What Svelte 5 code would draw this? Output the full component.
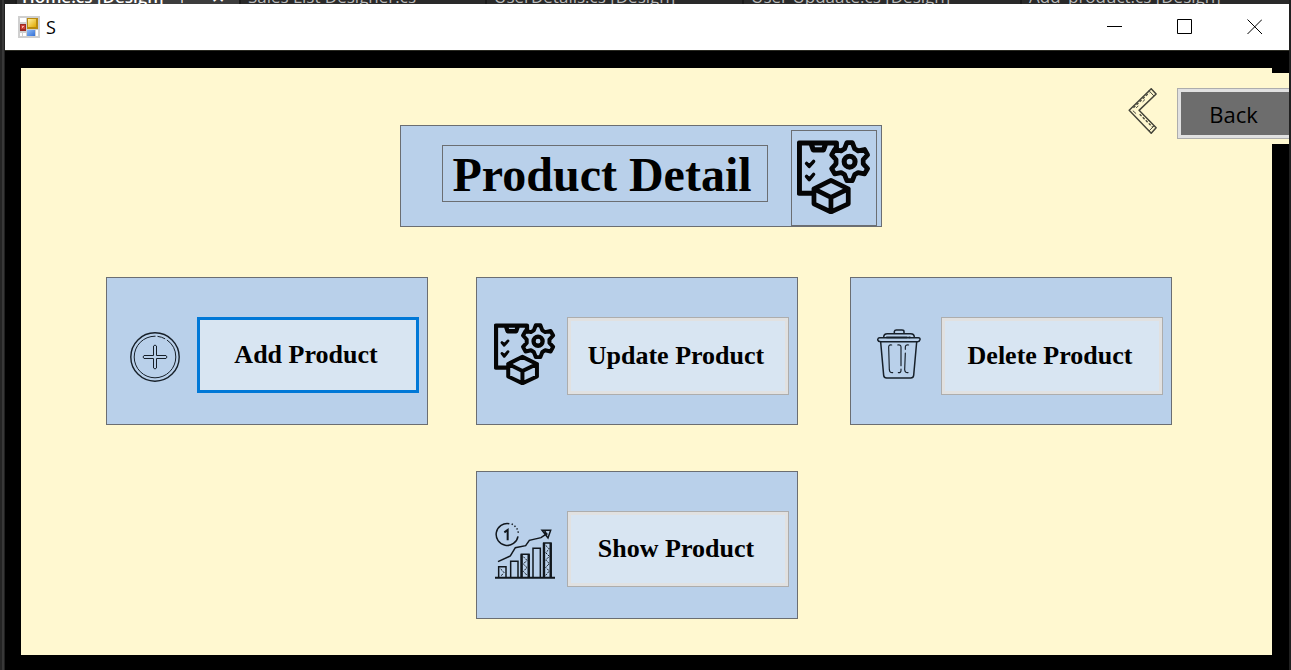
<script>
  const tabs = [
    { name: 'Sales List Designer.cs', width: 246 },
    { name: 'UserDetails.cs [Design]', width: 257 },
    { name: 'User Updaate.cs [Design]', width: 278 },
    { name: 'Add_product.cs [Design]', width: 260 }
  ];
  const cards = [
    { label: 'Add Product', icon: 'add', focused: true },
    { label: 'Update Product', icon: 'product' },
    { label: 'Delete Product', icon: 'trash' },
    { label: 'Show Product', icon: 'chart', short: true }
  ];
</script>

{#snippet productIcon(size)}
  <svg width={size} height={size} viewBox="38 54 218 218" fill="none" stroke="#050505" stroke-width="15" stroke-linejoin="round" stroke-linecap="round" aria-hidden="true">
    <path d="M84 211H45V63H154V83M80 66L86 83H116L122 66" />
    <path d="M66 123L74 132L87 117M66 161L74 171L87 155" stroke-width="10" />
    <path d="M69 125L77 127L83 122M69 163L77 166L83 160" stroke-width="8" />
    <path transform="translate(193 118)" stroke-width="14" d="M-15 -38L-8 -56H8L15 -38L25 -32L44 -36L53 -20L40 -6V6L53 20L44 36L25 32L15 38L8 56H-8L-15 38L-25 32L-44 36L-53 20L-40 6V-6L-53 -20L-44 -36L-25 -32Z" />
    <circle cx="193" cy="118" r="16" />
    <path d="M138 173L189 198V242L138 266L88 242V198ZM88 198L138 223L189 198M138 223V266" stroke-width="14" />
  </svg>
{/snippet}

<div class="desktop">
  <div class="tabs">
    <div class="tab active"><span>Home.cs [Design]</span><i>⊢</i><i>✕</i></div>
    {#each tabs as tab}
      <div class="tab" style="width: {tab.width}px">{tab.name}</div>
    {/each}
  </div>

  <div class="window">
    <div class="titlebar">
      <svg width="22" height="22" viewBox="0 0 22 22" aria-hidden="true">
        <defs>
          <linearGradient id="gold" x2="1" y2="1"><stop stop-color="#fff0a0" /><stop offset="1" stop-color="#e0a800" /></linearGradient>
          <linearGradient id="blue" x2="1" y2="1"><stop stop-color="#8fbcf7" /><stop offset="1" stop-color="#326fd6" /></linearGradient>
        </defs>
        <path fill="#cfcfcf" d="M0 0H22V22H0z" />
        <path fill="#fff" d="M2 2H8V6H2zM2 17H4V20H2zM5 17H8V20H5zM18 14H20V20H18z" />
        <path fill="#9c2a22" d="M2 8H8V15H2z" /><path fill="#cf4437" d="M3 9H7V13H3z" /><path fill="#f3b0a8" d="M4 10H6V11H5V12H4z" />
        <path fill="#b88a10" d="M9 2H20V13H9z" /><path fill="url(#gold)" d="M10 3H18V11H10z" />
        <path fill="url(#blue)" d="M9 14H17V20H9z" />
      </svg>
      <span class="caption">S</span>
      <button class="sys" aria-label="Minimize"><svg width="15" height="16"><path d="M0 7.5H15" /></svg></button>
      <button class="sys" aria-label="Maximize"><svg width="15" height="16"><path d="M.5 .5H14.5V14.5H.5z" /></svg></button>
      <button class="sys" aria-label="Close"><svg width="15" height="16"><path d="M.5 .5L15 15M15 .5L.5 15" /></svg></button>
    </div>

    <div class="frame">
      <main>
        <nav>
          <svg width="30" height="46" viewBox="806 264 88 140" fill="none" stroke="#45453a" stroke-width="4.500" stroke-linejoin="round" aria-hidden="true">
            <path d="M808 332L875 266L890 282L838 332L890 385L875 402Z" />
            <path d="M868 272L883 288M819 333L829 342M868 395L884 379" stroke-width="3" />
            <path d="M821 324L869 278M840 344L880 384" stroke-dasharray="8 5" stroke-width="4" />
            <path d="M829 325L836 318M849 306L856 299M848 342L853 347M866 361L872 367" stroke-width="3" />
          </svg>
          <button class="back">Back</button>
        </nav>

        <header>
          <h1>Product Detail</h1>
          <div class="picture">{@render productIcon(74)}</div>
        </header>

        <section>
          {#each cards as card}
            <div class="card">
              <div class="icon" class:lower={card.focused || card.short}>
                {#if card.icon === 'product'}
                  {@render productIcon(62)}
                {:else if card.icon === 'add'}
                  <svg width="50" height="50" viewBox="0 0 50 50" fill="none" stroke="#17202a" aria-hidden="true">
                    <circle cx="25" cy="25" r="24.2" stroke-width="1.4" />
                    <circle cx="25" cy="25" r="20.8" stroke-width="1" stroke-dasharray="98 2 8 2 20 1" />
                    <path d="M23.5 14Q25 12 26.500 14V23.500H36Q38 25 36 26.500H26.500V36Q25 38 23.500 36V26.500H14Q12 25 14 23.500H23.500Z" stroke-width="1" />
                  </svg>
                {:else if card.icon === 'trash'}
                  <svg width="44" height="50" viewBox="112 176 132 150" fill="none" stroke="#17202a" stroke-width="4.500" stroke-linejoin="round" stroke-linecap="round" aria-hidden="true">
                    <path d="M164 190V183Q165 179 170 179H187Q193 179 193 184V190M132 201Q132 190 143 190H213Q224 190 224 201" />
                    <path d="M120 202H236Q242 202 241 208Q240 214 234 214H123Q115 214 114 208Q115 202 120 202Z" />
                    <path d="M123 215L132 315Q133 323 141 323H213Q221 323 222 315L231 215" />
                    <path d="M141 201H202M208 201H211" stroke-width="5" />
                    <path d="M156 224Q147 222 147 230L149 298Q150 308 159 307M174 224Q184 222 184 230V286M184 296V300Q184 308 176 307M207 224Q197 222 197 230V237M197 248L195 298Q196 308 205 307" stroke-width="3.500" />
                  </svg>
                {:else}
                  <svg width="60" height="58" viewBox="77 170 180 174" fill="none" stroke="#11171d" stroke-width="4.500" aria-hidden="true">
                    <path d="M120 175A33 33 0 1 0 146 213" />
                    <path d="M127 176A33 33 0 0 1 147 208" stroke-dasharray="4 6" />
                    <path d="M105 201L115 194V225" stroke-width="6" />
                    <path d="M86 289L123 272L138 247L169 241L180 225L215 217L234 204M218 195H244L236 218ZM226 196L233 210" />
                    <path d="M77 337H257" stroke-width="6" />
                    <path d="M88 336V304H110V336M124 336V288H146V336M156 336V267H179V336M191 336V249H213V336M223 336V233H245V336" />
                    <path d="M94 311L104 321L96 331M162 274L173 285L162 296L173 307L162 318L173 330M229 240L240 251L229 262L240 273L229 284L240 295L229 306L240 317L229 330" stroke-width="3" stroke-dasharray="7 3" />
                    <path d="M157 267V336M178 267V336M224 233V336M244 233V336" stroke-width="7" />
                  </svg>
                {/if}
              </div>
              <button class:focused={card.focused} class:short={card.short}>{card.label}</button>
            </div>
          {/each}
        </section>
      </main>
    </div>
  </div>
</div>

<style>
  :global(body) {
    margin: 0;
    background: #262626;
  }
  * {
    box-sizing: border-box;
  }
  svg {
    display: block;
    flex: none;
  }
  button {
    padding: 0;
    color: #000;
  }
  .desktop {
    min-height: 100vh;
    display: flex;
    flex-direction: column;
    padding: 0 2px 0 5px;
    overflow: hidden;
    background: linear-gradient(90deg, #242424 2px, #383838 2px, #383838 4px, #202020 4px);
  }
  .tabs {
    height: 4px;
    display: flex;
    align-items: flex-end;
    overflow: hidden;
    margin-left: 10px;
    color: #b9b9b9;
    background: #2a2a2a;
    font: 17px/24px "Open Sans", "Noto Sans", sans-serif;
  }
  .tab {
    flex: none;
    height: 22px;
    padding-left: 7px;
    border-left: 2px solid #1b1b1b;
    line-height: 30px;
    white-space: nowrap;
  }
  .tab.active {
    width: 224px;
    display: flex;
    gap: 16px;
    padding-left: 5px;
    color: #fff;
    background: #3d3d3d;
    font-weight: 600;
  }
  .tab i {
    font-style: normal;
    font-weight: 400;
  }
  .window {
    flex: 1;
    display: flex;
    flex-direction: column;
    background: #fff;
  }
  .titlebar {
    height: 46px;
    display: flex;
    align-items: center;
    padding-left: 13px;
  }
  .caption {
    flex: 1;
    padding-left: 6px;
    font: 18px/24px "Open Sans", "Noto Sans", sans-serif;
  }
  .sys {
    width: 70px;
    height: 46px;
    display: grid;
    place-items: center;
    border: 0;
    background: none;
  }
  .sys path {
    fill: none;
    stroke: #000;
  }
  .frame {
    flex: 1;
    display: flex;
    padding: 17px 17px 15px 16px;
    border-top: 1px solid #2a2a22;
    background: #000;
  }
  main {
    flex: 1;
    display: flex;
    flex-direction: column;
    background: #fff8d0;
    padding-bottom: 36px;
  }
  nav {
    align-self: flex-end;
    display: flex;
    align-items: flex-start;
    gap: 19px;
    height: 71px;
    margin-top: 5px;
    margin-right: -17px;
    padding: 15px 0 0 15px;
    background: #fff8d0;
  }
  .back {
    width: 112px;
    height: 51px;
    border: 1px solid #adadad;
    border-right: 0;
    box-shadow: inset 3px 0 #e1e1e1, inset 0 3px #e1e1e1, inset 0 -3px #e1e1e1;
    background: #6d6d6d;
    font: 22px/28px "Open Sans", "Noto Sans", sans-serif;
  }
  header {
    align-self: center;
    display: flex;
    width: 482px;
    height: 102px;
    margin: -19px 12px 50px 0;
    padding: 4px 4px 0 41px;
    border: 1px solid #6b6e72;
    background: #b9d0ea;
  }
  h1 {
    width: 326px;
    height: 57px;
    margin: 15px 23px 0 0;
    padding-left: 10px;
    border: 1px solid #6b6e72;
    font: bold 48px/58px "Liberation Serif", serif;
    white-space: nowrap;
  }
  .picture {
    width: 86px;
    height: 96px;
    padding: 9px 5px;
    border: 1px solid #6b6e72;
  }
  section {
    align-self: center;
    display: grid;
    grid-template-columns: 370px 374px 322px;
    row-gap: 46px;
    margin-right: 15px;
  }
  .card {
    width: 322px;
    height: 148px;
    display: flex;
    align-items: flex-start;
    padding: 39px 8px 0 6px;
    border: 1px solid #6b6e72;
    background: #b9d0ea;
  }
  .card:last-child {
    grid-column: 2;
  }
  .icon {
    flex: 1;
    height: 74px;
    display: grid;
    place-items: center;
  }
  .icon.lower {
    height: 80px;
  }
  .card button {
    width: 222px;
    height: 78px;
    padding-right: 4px;
    border: 1px solid #adadad;
    box-shadow: inset 0 0 0 3px #e1e1e1;
    background: #d8e5f2;
    font: bold 26px/32px "Liberation Serif", serif;
  }
  .card .short {
    height: 76px;
  }
  .card .focused {
    height: 76px;
    border: 3px solid #0078d7;
    box-shadow: none;
  }
</style>
